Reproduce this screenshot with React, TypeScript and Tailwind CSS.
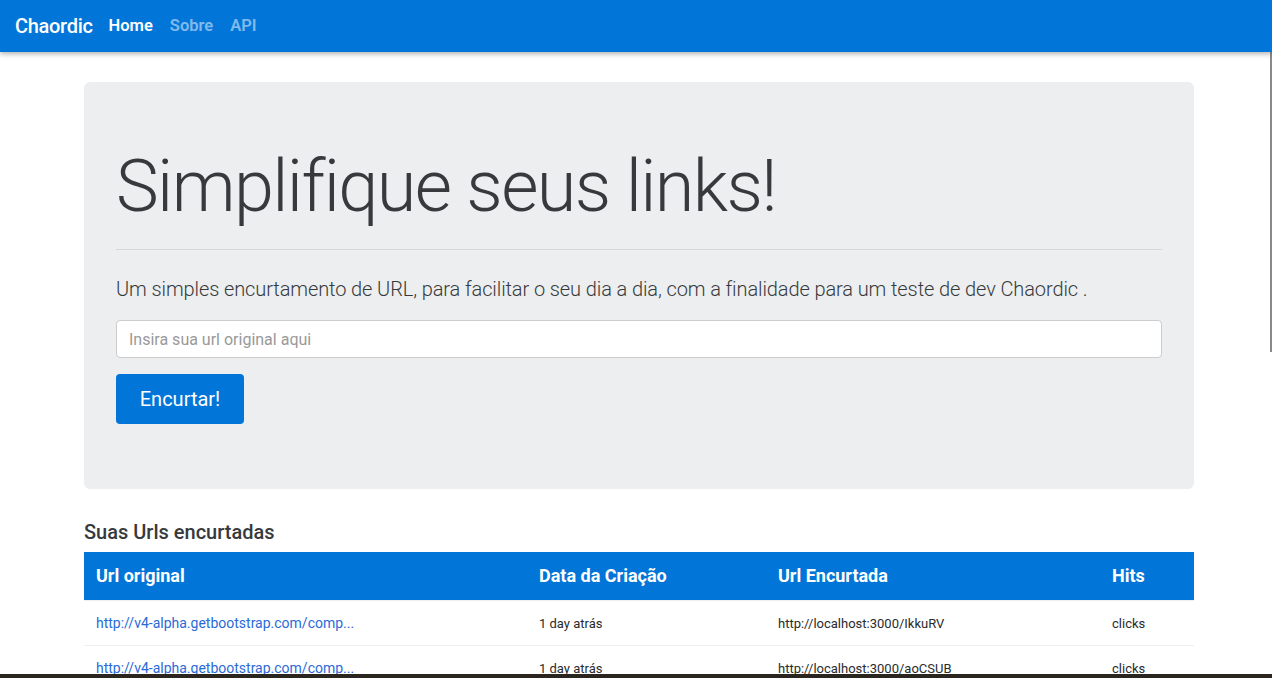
import React from "react";

const rows = [
  {
    original: "http://v4-alpha.getbootstrap.com/comp...",
    date: "1 day atrás",
    short: "http://localhost:3000/IkkuRV",
    hits: "clicks",
  },
  {
    original: "http://v4-alpha.getbootstrap.com/comp...",
    date: "1 day atrás",
    short: "http://localhost:3000/aoCSUB",
    hits: "clicks",
  },
];

function Navbar() {
  return (
    <nav className="relative z-10 flex h-[52px] items-center bg-[#0275d8] px-[15px] shadow-[0_2px_5px_rgba(0,0,0,0.3)]">
      <span className="mr-4 text-[20px] font-medium tracking-[-0.3px] text-white">Chaordic</span>
      <div className="flex items-center gap-[17px] text-[16.5px] font-semibold">
        <a href="#" className="text-white">Home</a>
        <a href="#" className="text-white/50">Sobre</a>
        <a href="#" className="text-white/50">API</a>
      </div>
    </nav>
  );
}

function Hero() {
  return (
    <section className="rounded-[6px] bg-[#eceeef] px-8 pb-[65px] pt-[65px]">
      <h1 className="text-[72px] font-light leading-[1.1] tracking-[-1.6px] text-[#373a3c]">
        Simplifique seus links!
      </h1>
      <hr className="mt-[23px] border-t border-[#d5d7d8]" />
      <p className="mt-[24px] text-[20px] font-light tracking-[-0.1px] text-[#373a3c]">
        Um simples encurtamento de URL, para facilitar o seu dia a dia, com a finalidade para um teste de dev Chaordic .
      </p>
      <input
        type="text"
        placeholder="Insira sua url original aqui"
        className="mt-[16px] block h-[38px] w-full rounded-[4px] border border-[#cccccc] bg-white px-3 text-[16px] text-[#55595c] placeholder:text-[#999999] outline-none"
      />
      <button className="mt-[16px] h-[50px] w-[128px] rounded-[4px] bg-[#0275d8] text-[20px] text-white">
        Encurtar!
      </button>
    </section>
  );
}

function UrlTable() {
  return (
    <section className="mt-[31px]">
      <h2 className="text-[20px] font-medium leading-[24px] text-[#373a3c]">Suas Urls encurtadas</h2>
      <table className="mt-[8px] w-full table-fixed border-collapse text-left">
        <colgroup>
          <col className="w-[443px]" />
          <col className="w-[239px]" />
          <col className="w-[334px]" />
          <col />
        </colgroup>
        <thead>
          <tr className="h-[48px] bg-[#0275d8] text-[18px] font-bold text-white">
            <th className="px-3">Url original</th>
            <th className="px-3">Data da Criação</th>
            <th className="px-3">Url Encurtada</th>
            <th className="px-3">Hits</th>
          </tr>
        </thead>
        <tbody className="text-[13px] text-[#292b2c]">
          {rows.map((r, i) => (
            <tr key={i} className="h-[45px] border-t border-[#eceeef]">
              <td className="px-3 pt-[2px]">
                <a href="#" className="text-[14px] text-[#2a6ad8]">{r.original}</a>
              </td>
              <td className="px-3 pt-[2px]">{r.date}</td>
              <td className="px-3 pt-[2px]">{r.short}</td>
              <td className="px-3 pt-[2px]">{r.hits}</td>
            </tr>
          ))}
        </tbody>
      </table>
    </section>
  );
}

export default function App() {
  return (
    <div className="relative flex h-[678px] flex-col overflow-hidden bg-white font-['Roboto',sans-serif]">
      <Navbar />
      <main className="flex-1 overflow-hidden">
        <div className="ml-[84px] w-[1110px] pt-[30px]">
          <Hero />
          <UrlTable />
        </div>
      </main>
      <div className="h-[4px] bg-[#2b2520]" />
      <div className="absolute right-0 top-[52px] h-[300px] w-[2px] bg-[#8a8a8a]" />
    </div>
  );
}
